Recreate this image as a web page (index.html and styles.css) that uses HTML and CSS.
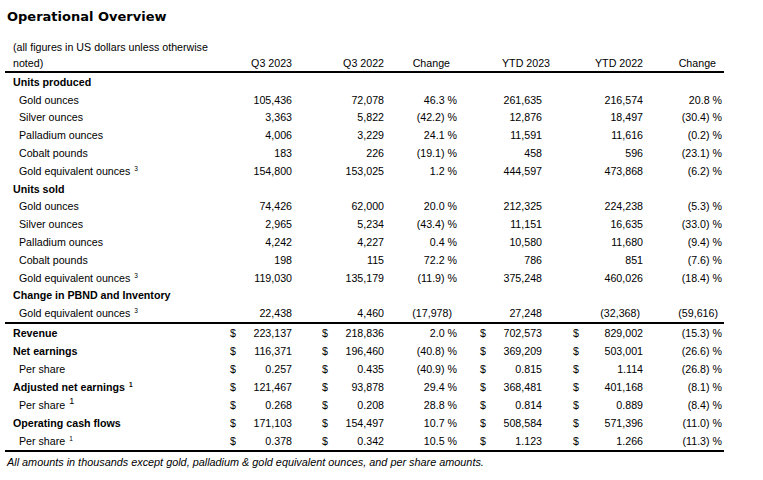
FILE: index.html
```html
<!DOCTYPE html>
<html>
<head>
<meta charset="utf-8">
<link rel="stylesheet" href="styles.css">
</head>
<body>
<div class="page">
  <h1 class="title">Operational Overview</h1>
  <div class="fin">
    <div class="row head">
      <div class="lab hl">(all figures in US dollars unless otherwise<br>noted)</div>
      <div class="h-q3">Q3 2023</div>
      <div class="h-q2">Q3 2022</div>
      <div class="h-ch1">Change</div>
      <div class="h-y3">YTD 2023</div>
      <div class="h-y2">YTD 2022</div>
      <div class="h-ch2">Change</div>
    </div>

    <div class="sec top">
      <div class="row"><div class="lab b">Units produced</div></div>
      <div class="row"><div class="lab i">Gold ounces</div><div></div><div class="v">105,436</div><div></div><div class="v">72,078</div><div class="v">46.3 %</div><div></div><div class="v">261,635</div><div></div><div class="v">216,574</div><div class="v">20.8 %</div></div>
      <div class="row"><div class="lab i">Silver ounces</div><div></div><div class="v">3,363</div><div></div><div class="v">5,822</div><div class="v">(42.2) %</div><div></div><div class="v">12,876</div><div></div><div class="v">18,497</div><div class="v">(30.4) %</div></div>
      <div class="row"><div class="lab i">Palladium ounces</div><div></div><div class="v">4,006</div><div></div><div class="v">3,229</div><div class="v">24.1 %</div><div></div><div class="v">11,591</div><div></div><div class="v">11,616</div><div class="v">(0.2) %</div></div>
      <div class="row"><div class="lab i">Cobalt pounds</div><div></div><div class="v">183</div><div></div><div class="v">226</div><div class="v">(19.1) %</div><div></div><div class="v">458</div><div></div><div class="v">596</div><div class="v">(23.1) %</div></div>
      <div class="row"><div class="lab i">Gold equivalent ounces <span class="sup">3</span></div><div></div><div class="v">154,800</div><div></div><div class="v">153,025</div><div class="v">1.2 %</div><div></div><div class="v">444,597</div><div></div><div class="v">473,868</div><div class="v">(6.2) %</div></div>
      <div class="row"><div class="lab b">Units sold</div></div>
      <div class="row"><div class="lab i">Gold ounces</div><div></div><div class="v">74,426</div><div></div><div class="v">62,000</div><div class="v">20.0 %</div><div></div><div class="v">212,325</div><div></div><div class="v">224,238</div><div class="v">(5.3) %</div></div>
      <div class="row"><div class="lab i">Silver ounces</div><div></div><div class="v">2,965</div><div></div><div class="v">5,234</div><div class="v">(43.4) %</div><div></div><div class="v">11,151</div><div></div><div class="v">16,635</div><div class="v">(33.0) %</div></div>
      <div class="row"><div class="lab i">Palladium ounces</div><div></div><div class="v">4,242</div><div></div><div class="v">4,227</div><div class="v">0.4 %</div><div></div><div class="v">10,580</div><div></div><div class="v">11,680</div><div class="v">(9.4) %</div></div>
      <div class="row"><div class="lab i">Cobalt pounds</div><div></div><div class="v">198</div><div></div><div class="v">115</div><div class="v">72.2 %</div><div></div><div class="v">786</div><div></div><div class="v">851</div><div class="v">(7.6) %</div></div>
      <div class="row"><div class="lab i">Gold equivalent ounces <span class="sup">3</span></div><div></div><div class="v">119,030</div><div></div><div class="v">135,179</div><div class="v">(11.9) %</div><div></div><div class="v">375,248</div><div></div><div class="v">460,026</div><div class="v">(18.4) %</div></div>
      <div class="row"><div class="lab b">Change in PBND and Inventory</div></div>
      <div class="row"><div class="lab i">Gold equivalent ounces <span class="sup">3</span></div><div></div><div class="v">22,438</div><div></div><div class="v">4,460</div><div class="v p1">(17,978)</div><div></div><div class="v">27,248</div><div></div><div class="v p2">(32,368)</div><div class="v p3">(59,616)</div></div>
    </div>

    <div class="sec bot">
      <div class="row r18"><div class="lab b">Revenue</div><div class="s">$</div><div class="v">223,137</div><div class="s">$</div><div class="v">218,836</div><div class="v">2.0 %</div><div class="s">$</div><div class="v">702,573</div><div class="s">$</div><div class="v">829,002</div><div class="v">(15.3) %</div></div>
      <div class="row r18"><div class="lab b">Net earnings</div><div class="s">$</div><div class="v">116,371</div><div class="s">$</div><div class="v">196,460</div><div class="v">(40.8) %</div><div class="s">$</div><div class="v">369,209</div><div class="s">$</div><div class="v">503,001</div><div class="v">(26.6) %</div></div>
      <div class="row r18"><div class="lab i">Per share</div><div class="s">$</div><div class="v">0.257</div><div class="s">$</div><div class="v">0.435</div><div class="v">(40.9) %</div><div class="s">$</div><div class="v">0.815</div><div class="s">$</div><div class="v">1.114</div><div class="v">(26.8) %</div></div>
      <div class="row r18"><div class="lab b">Adjusted net earnings <span class="sup">1</span></div><div class="s">$</div><div class="v">121,467</div><div class="s">$</div><div class="v">93,878</div><div class="v">29.4 %</div><div class="s">$</div><div class="v">368,481</div><div class="s">$</div><div class="v">401,168</div><div class="v">(8.1) %</div></div>
      <div class="row r19"><div class="lab i">Per share <span class="supbig">1</span></div><div class="s">$</div><div class="v">0.268</div><div class="s">$</div><div class="v">0.208</div><div class="v">28.8 %</div><div class="s">$</div><div class="v">0.814</div><div class="s">$</div><div class="v">0.889</div><div class="v">(8.4) %</div></div>
      <div class="row r18"><div class="lab b">Operating cash flows</div><div class="s">$</div><div class="v">171,103</div><div class="s">$</div><div class="v">154,497</div><div class="v">10.7 %</div><div class="s">$</div><div class="v">508,584</div><div class="s">$</div><div class="v">571,396</div><div class="v">(11.0) %</div></div>
      <div class="row r18"><div class="lab i">Per share <span class="sup">1</span></div><div class="s">$</div><div class="v">0.378</div><div class="s">$</div><div class="v">0.342</div><div class="v">10.5 %</div><div class="s">$</div><div class="v">1.123</div><div class="s">$</div><div class="v">1.266</div><div class="v">(11.3) %</div></div>
    </div>
  </div>
  <p class="note">All amounts in thousands except gold, palladium &amp; gold equivalent ounces, and per share amounts.</p>
</div>
</body>
</html>
```

FILE: styles.css
```css
html, body {
  margin: 0;
  padding: 0;
  background: #fff;
}

.page {
  width: 763px;
  height: 480px;
  overflow: hidden;
  color: #000;
  font-family: "Liberation Sans", Arial, sans-serif;
  font-size: 10.67px;
}

.title {
  margin: 0;
  padding: 9px 0 0 7px;
  height: 29px;
  box-sizing: border-box;
  line-height: 16px;
  font-family: "DejaVu Sans", Verdana, sans-serif;
  font-weight: bold;
  font-size: 13px;
  letter-spacing: 0;
}

.fin {
  margin-left: 5px;
  width: 719px;
  padding-top: 10px;
}

.row {
  display: grid;
  grid-template-columns: 195px 36px 56px 36px 56px 73px 29px 56px 37px 64px 79px 2px;
  grid-template-rows: 100%;
  align-items: center;
  height: 17.8px;
  white-space: nowrap;
}

.row.r18 { height: 18px; }
.row.r19 { height: 18px; }

.row.head {
  height: 32px;
  align-items: end;
  line-height: 16px;
  border-bottom: 2px solid #000;
}

.lab {
  padding-left: 8px;
}

.hl {
  grid-column: 1 / 2;
  grid-row: 1;
  white-space: nowrap;
}

.lab.i { padding-left: 14px; }
.lab.b { font-weight: bold; }

.h-q3 { grid-column: 2 / 4; grid-row: 1; text-align: right; }
.h-q2 { grid-column: 4 / 6; grid-row: 1; text-align: right; }
.h-ch1 { grid-column: 6 / 7; grid-row: 1; text-align: right; padding-right: 7px; }
.h-y3 { grid-column: 7 / 9; grid-row: 1; text-align: right; margin-right: -8px; }
.h-y2 { grid-column: 10 / 11; grid-row: 1; text-align: right; }
.h-ch2 { grid-column: 11 / 12; grid-row: 1; text-align: right; padding-right: 6px; }

.v { text-align: right; }
.s { text-align: right; }
.p1 { padding-right: 5px; }
.p2 { padding-right: 3px; }
.p3 { padding-right: 4px; }

.sec.top {
  border-bottom: 2px solid #000;
}

.sec.bot {
  border-bottom: 2px solid #000;
}

.sup {
  font-size: 6.5px;
  position: relative;
  top: -4px;
  margin-left: 1px;
}

.supbig {
  font-size: 9px;
  position: relative;
  top: -5px;
  margin-left: 1px;
}

.note {
  margin: 0;
  padding: 2px 0 0 7px;
  line-height: 16px;
  font-size: 10.85px;
  font-style: italic;
}
```
